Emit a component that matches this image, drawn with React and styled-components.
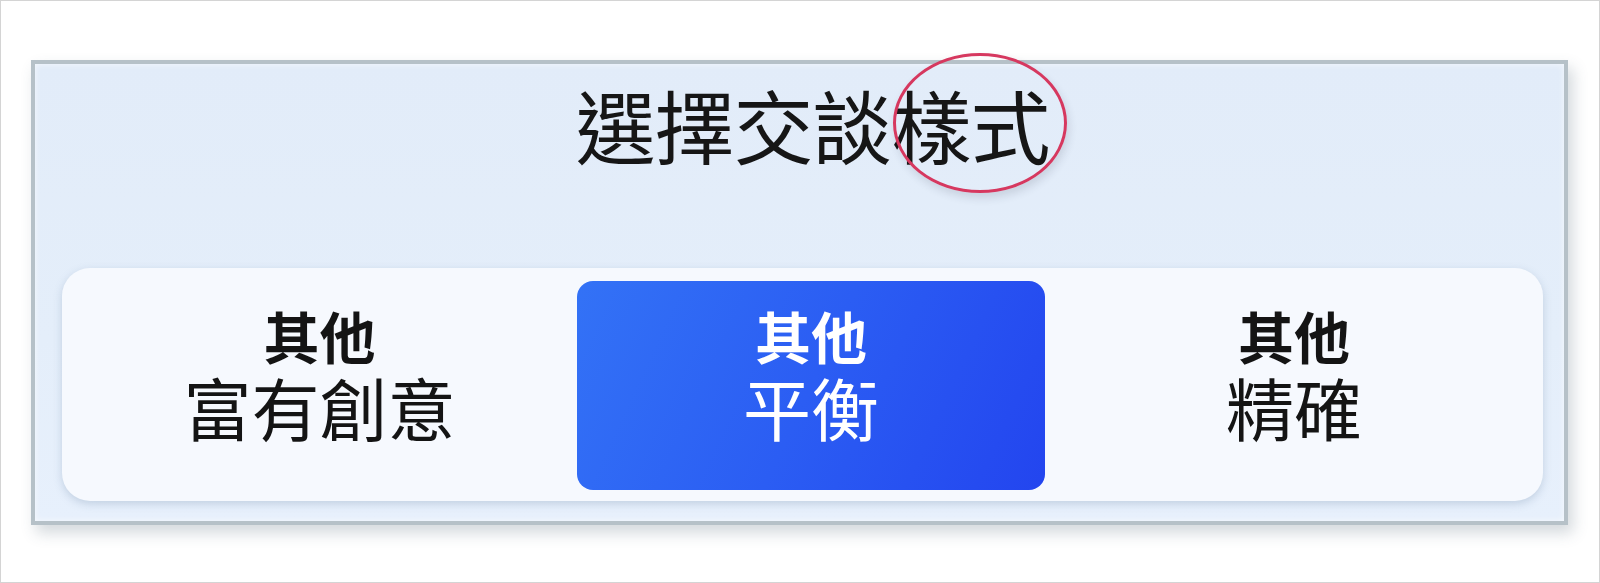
import React from 'react'
import styled, { createGlobalStyle } from 'styled-components'

const GlobalStyle = createGlobalStyle`
    * { box-sizing: border-box; }
    body {
        margin: 0;
        background: #ffffff;
        font-family: "Noto Sans CJK TC", "Noto Sans", sans-serif;
    }
`

const options = [
    { id: 'creative', tag: '其他', text: '富有創意' },
    { id: 'balanced', tag: '其他', text: '平衡', active: true },
    { id: 'precise', tag: '其他', text: '精確' },
]

const App = () => {
    return (
        <Frame>
            <GlobalStyle />
            <Panel>
                <Title>選擇交談樣式</Title>
                {/* red annotation ring over the last two characters */}
                <Ring />
                <Segments>
                    {options.map(({ id, tag, text, active }) => (
                        <Option key={id} $active={active}>
                            <Tag>{tag}</Tag>
                            <Label>{text}</Label>
                        </Option>
                    ))}
                </Segments>
            </Panel>
        </Frame>
    )
}

const Frame = styled.div`
    width: 1600px;
    height: 583px;
    border: 1px solid #d4d4d4;
    padding: 59px 0 0 30px;
    background: #ffffff;
`

const Panel = styled.div`
    position: relative;
    width: 1537px;
    height: 465px;
    border: 4px solid #b6c1c8;
    background: linear-gradient(180deg, #e2ecf9 0%, #e4eefa 60%, #e7f0fc 100%);
    box-shadow: 5px 8px 14px rgba(60, 80, 100, 0.22), inset 0 0 6px rgba(255, 255, 255, 0.7);
    display: flex;
    flex-direction: column;
`

const Title = styled.h1`
    margin: 19px 0 0;
    padding-left: 26px;
    text-align: center;
    font-size: 80px;
    font-weight: 400;
    line-height: 1;
    color: #161616;
    letter-spacing: -1px;
`

const Ring = styled.span`
    position: absolute;
    left: 858px;
    top: -11px;
    width: 174px;
    height: 140px;
    border: 3px solid #d6385f;
    border-radius: 50%;
    box-shadow: 2px 5px 9px rgba(40, 50, 70, 0.14);
    pointer-events: none;
`

const Segments = styled.div`
    margin: auto 21px 20px 27px;
    height: 233px;
    padding: 13px 15px 11px;
    border-radius: 28px;
    background: #f6f9fe;
    box-shadow: 0 3px 8px rgba(110, 135, 170, 0.3);
    display: grid;
    grid-template-columns: 485px 468px 1fr;
    gap: 15px;
`

const Option = styled.div`
    border-radius: 16px;
    display: flex;
    flex-direction: column;
    align-items: center;
    padding-top: 26px;
    gap: 10px;
    color: ${({ $active }) => ($active ? '#ffffff' : '#141414')};
    background: ${({ $active }) =>
        $active ? 'linear-gradient(115deg, #3372f6 0%, #2b5df3 50%, #2345ef 100%)' : 'transparent'};
`

const Tag = styled.span`
    font-size: 56px;
    font-weight: 700;
    line-height: 1;
`

const Label = styled.span`
    font-size: 68px;
    font-weight: 400;
    line-height: 1;
`

export default App
